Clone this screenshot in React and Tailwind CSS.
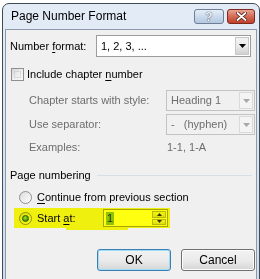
import React from "react"

const font = { fontFamily: '"Liberation Sans", Arial, sans-serif' }

function DropArrow({ disabled }) {
  return (
    <svg width="7" height="4" viewBox="0 0 7 4">
      <path d="M0 0h7L3.5 4z" fill={disabled ? "#a8a8a8" : "#000"} />
    </svg>
  )
}

function Combo({ value, width, disabled }) {
  return (
    <div
      className={`flex h-full items-stretch border ${
        disabled ? "border-[#c3c3c3] bg-[#f0f0f0] text-[#6d6d6d]" : "border-[#9c9c9c] bg-white text-black"
      }`}
      style={{ width }}
    >
      <div className="flex flex-1 items-center whitespace-nowrap pl-[4px] leading-none">{value}</div>
      <div
        className={`m-[1px] flex w-[14px] items-center justify-center border ${
          disabled
            ? "border-[#dadada] bg-[#f4f4f4]"
            : "border-[#c7c7c7] bg-gradient-to-b from-[#f2f2f2] via-[#ebebeb] to-[#cfcfcf]"
        }`}
      >
        <DropArrow disabled={disabled} />
      </div>
    </div>
  )
}

function Radio({ checked }) {
  return (
    <div className="flex h-[13px] w-[13px] shrink-0 items-center justify-center rounded-full border border-[#8e8f8f] bg-gradient-to-br from-[#dcdcdc] to-[#ffffff]">
      {checked && (
        <div className="h-[7px] w-[7px] rounded-full border border-[#1f5a8c] bg-[radial-gradient(circle_at_40%_35%,#a6e0ff,#1c78c9)]" />
      )}
    </div>
  )
}

export default function App() {
  return (
    <div className="h-[279px] w-[260px] overflow-hidden bg-white pl-[2px] pt-[3px] text-[11px] text-black" style={font}>
      <div className="h-[290px] w-[258px] rounded-t-[7px] border border-[#404b58] bg-gradient-to-b from-[#e3ecf6] to-[#cfdcec] px-[2px]">
        {/* caption */}
        <div className="flex h-[25px] items-start">
          <div className="whitespace-nowrap pl-[6px] pt-[6px] text-[12px] leading-none text-black">Page Number Format</div>
          <div className="ml-auto mr-[2px] mt-[5px] flex gap-[3px]">
            <div className="flex h-[15px] w-[30px] items-center justify-center rounded-[3px] border border-[#6f7e92] bg-gradient-to-b from-[#e6eef8] via-[#cbdaec] to-[#b4c8e0] text-[12px] font-bold leading-none text-[#f6f8fb] [text-shadow:0_0_1px_#33404f,0_0_1px_#33404f]">
              ?
            </div>
            <div className="flex h-[15px] w-[28px] items-center justify-center rounded-[3px] border border-[#7b2a1d] bg-gradient-to-b from-[#e9a493] via-[#d36b55] to-[#c03f28]">
              <svg width="11" height="9" viewBox="0 0 11 9">
                <path d="M1.5 1l8 7M9.5 1l-8 7" stroke="#4a1a12" strokeWidth="3.4" strokeLinecap="round" />
                <path d="M1.5 1l8 7M9.5 1l-8 7" stroke="#fff" strokeWidth="1.8" strokeLinecap="round" />
              </svg>
            </div>
          </div>
        </div>

        {/* client */}
        <div className="relative h-[260px] border border-[#8d9aab] bg-[#f0f0f0] pl-[4px]">
          <div className="mt-[5px] flex h-[22px] items-center">
            <div className="w-[86px] whitespace-nowrap">
              Number <span className="underline underline-offset-2">f</span>ormat:
            </div>
            <Combo value="1, 2, 3, ..." width={155} />
          </div>

          <div className="ml-[1px] mt-[11px] flex h-[13px] items-center">
            <div className="h-[13px] w-[13px] border border-[#8e8f8f] bg-gradient-to-br from-[#d5d5d5] via-[#eeeeee] to-[#f8f8f8] p-[2px]">
              <div className="h-full w-full border border-[#c9c9c9]/60" />
            </div>
            <div className="ml-[3px] whitespace-nowrap">
              Include chapter <span className="underline underline-offset-2">n</span>umber
            </div>
          </div>

          <div className="mt-[9px] flex h-[21px] items-center text-[#6d6d6d]">
            <div className="w-[156px] whitespace-nowrap pl-[19px]">Chapter starts with style:</div>
            <Combo value="Heading 1" width={89} disabled />
          </div>

          <div className="mt-[3px] flex h-[21px] items-center text-[#6d6d6d]">
            <div className="w-[156px] whitespace-nowrap pl-[19px]">Use separator:</div>
            <Combo value={<span className="whitespace-pre">-   (hyphen)</span>} width={89} disabled />
          </div>

          <div className="mt-[4px] flex h-[16px] items-center text-[#6d6d6d]">
            <div className="w-[156px] whitespace-nowrap pl-[19px]">Examples:</div>
            <div className="pl-[1px]">1-1, 1-A</div>
          </div>

          <div className="mt-[12px] flex h-[16px] items-center">
            <div className="whitespace-nowrap pr-[6px]">Page numbering</div>
            <div className="mr-[4px] h-px flex-1 bg-[#d5dfe5]" />
          </div>

          <div className="mt-[6px] flex h-[16px] items-center pl-[9px]">
            <Radio />
            <div className="ml-[5px] whitespace-nowrap">
              <span className="underline underline-offset-2">C</span>ontinue from previous section
            </div>
          </div>

          <div className="mt-[4px] flex h-[18px] items-center pl-[9px]">
            <Radio checked />
            <div className="ml-[5px] w-[66px] whitespace-nowrap">
              Start <span className="underline underline-offset-2">a</span>t:
            </div>
            <div className="flex h-[18px] w-[65px] items-stretch border border-[#a6a6a6] bg-white">
              <div className="flex flex-1 items-center pl-[2px]">
                <span className="bg-[#8fc23a] px-[1px] leading-[13px] text-[#1f2f10]">1</span>
              </div>
              <div className="flex w-[16px] flex-col gap-[1px] p-[1px]">
                <div className="flex flex-1 items-center justify-center border border-[#b9b9b9] bg-gradient-to-b from-[#f4f4f4] to-[#dedede]">
                  <svg width="5" height="3" viewBox="0 0 5 3"><path d="M0 3h5L2.5 0z" fill="#333" /></svg>
                </div>
                <div className="flex flex-1 items-center justify-center border border-[#b9b9b9] bg-gradient-to-b from-[#f4f4f4] to-[#dedede]">
                  <svg width="5" height="3" viewBox="0 0 5 3"><path d="M0 0h5L2.5 3z" fill="#333" /></svg>
                </div>
              </div>
            </div>
          </div>

          <div className="mt-[22px] flex h-[22px] gap-[10px] pl-[87px]">
            <div className="flex w-[74px] items-center justify-center rounded-[3px] border border-[#3c7fb1] bg-gradient-to-b from-[#f2f2f2] via-[#ebebeb] to-[#d6d6d6] text-[12px] shadow-[inset_0_0_0_1px_#9fdcf5]">
              OK
            </div>
            <div className="flex w-[74px] items-center justify-center rounded-[3px] border border-[#707070] bg-gradient-to-b from-[#f2f2f2] via-[#ebebeb] to-[#d6d6d6] text-[12px] shadow-[inset_0_0_0_1px_#fcfcfc]">
              Cancel
            </div>
          </div>

          {/* highlighter marks */}
          <div className="pointer-events-none absolute left-[8px] top-[178px] h-[20px] w-[156px] bg-[#ffff10] mix-blend-multiply" />
          <div className="pointer-events-none absolute left-[60px] top-[198px] h-[2px] w-[62px] bg-[#ffff10] mix-blend-multiply" />
        </div>
      </div>
    </div>
  )
}
